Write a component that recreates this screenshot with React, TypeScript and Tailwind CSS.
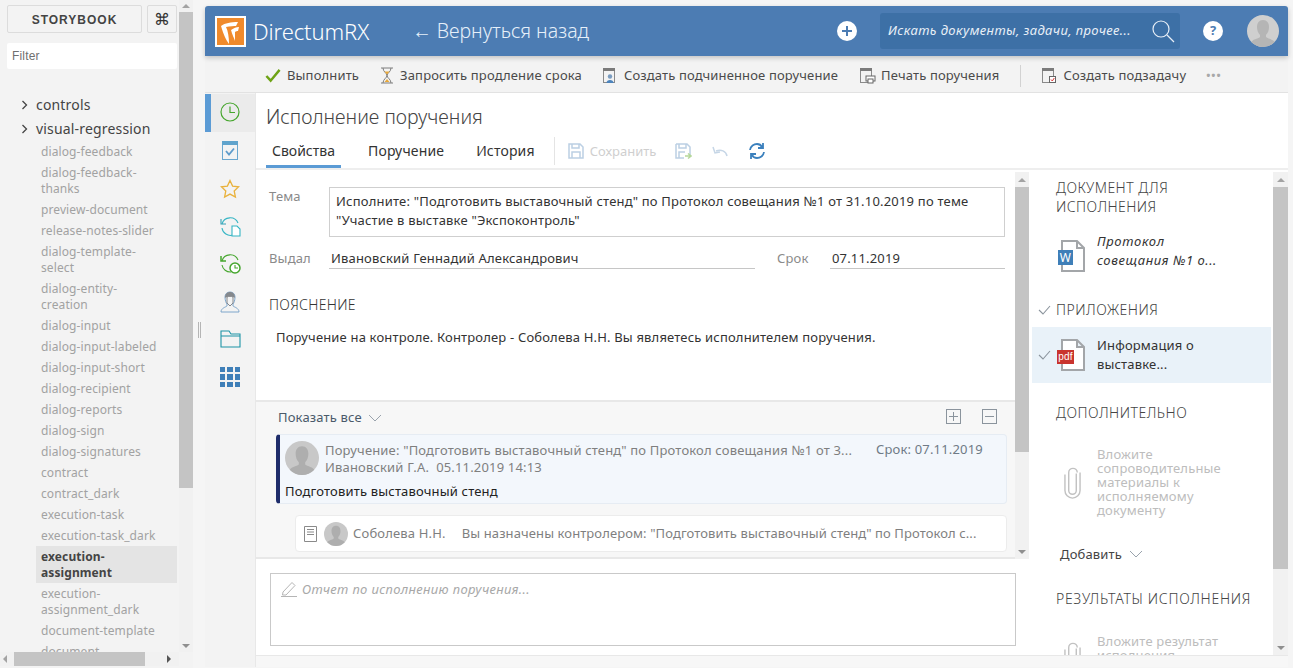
import type { ReactNode } from "react";

const NAV_ITEMS = [
  ["dialog-feedback"],
  ["dialog-feedback-", "thanks"],
  ["preview-document"],
  ["release-notes-slider"],
  ["dialog-template-", "select"],
  ["dialog-entity-", "creation"],
  ["dialog-input"],
  ["dialog-input-labeled"],
  ["dialog-input-short"],
  ["dialog-recipient"],
  ["dialog-reports"],
  ["dialog-sign"],
  ["dialog-signatures"],
  ["contract"],
  ["contract_dark"],
  ["execution-task"],
  ["execution-task_dark"],
  ["execution-", "assignment"],
  ["execution-", "assignment_dark"],
  ["document-template"],
  ["document"],
];

function Chevron({ className = "" }: { className?: string }) {
  return (
    <svg className={className} width="14" height="8" viewBox="0 0 14 8" fill="none" stroke="#9aa3ad">
      <path d="M1 1l6 6 6-6" />
    </svg>
  );
}

function Avatar({ size, fill = "#c8c8c8", head = "#aeaeae" }: { size: number; fill?: string; head?: string }) {
  return (
    <svg width={size} height={size} viewBox="0 0 32 32" className="shrink-0">
      <clipPath id={`av${size}`}>
        <circle cx="16" cy="16" r="16" />
      </clipPath>
      <g clipPath={`url(#av${size})`}>
        <rect width="32" height="32" fill={fill} />
        <path d="M16 5c-4 0-6 3-6 7 0 3 1 6 3 8v2c-2 2-8 2-9 6v4h24v-4c-1-4-7-4-9-6v-2c2-2 3-5 3-8 0-4-2-7-6-7z" fill={head} />
      </g>
    </svg>
  );
}

function Sheet({ badge }: { badge?: ReactNode }) {
  return (
    <div className="relative h-[32px] w-[28px] shrink-0">
      <svg width="28" height="32" viewBox="0 0 28 32" fill="none" stroke="#a3a6a9" strokeWidth="2">
        <path d="M5 1h15l7 7v23H5zM20 1v7h7" fill="#fff" />
      </svg>
      {badge}
    </div>
  );
}

function ToolButton({ icon, label }: { icon: ReactNode; label: string }) {
  return (
    <div className="flex items-center gap-[5px] whitespace-nowrap">
      {icon}
      <span>{label}</span>
    </div>
  );
}

function CalendarIcon({ children }: { children?: ReactNode }) {
  return (
    <svg width="17" height="17" viewBox="0 0 17 17" fill="none">
      <rect x="1.5" y="2.5" width="11" height="13" stroke="#8a8a8a" />
      <rect x="1" y="1" width="12" height="3" fill="#7b7b7b" />
      {children}
    </svg>
  );
}

function Scrollbar({ thumbHeight, button = 15, className = "" }: { thumbHeight: number; button?: number; className?: string }) {
  return (
    <div className={`flex w-[14px] shrink-0 flex-col bg-[#f1f1f1] ${className}`}>
      <div className="flex shrink-0 items-center justify-center" style={{ height: button }}>
        <div className="h-0 w-0 border-x-[4px] border-b-[4px] border-x-transparent border-b-[#a3a3a3]" />
      </div>
      <div className="min-h-0 flex-1">
        <div className="bg-[#c4c4c4]" style={{ height: thumbHeight }} />
      </div>
      <div className="flex shrink-0 items-center justify-center" style={{ height: button }}>
        <div className="h-0 w-0 border-x-[4px] border-t-[4px] border-x-transparent border-t-[#8f8f8f]" />
      </div>
    </div>
  );
}

function Sidebar() {
  return (
    <aside className="flex h-[668px] w-[193px] shrink-0 flex-col overflow-hidden bg-[#f3f3f3]">
      <div className="flex min-h-0 flex-1">
        <div className="flex w-[179px] flex-col pl-[7px] pr-[2px]">
          <div className="mt-[5px] flex h-[28px] shrink-0 gap-[5px]">
            <div className="flex w-[135px] items-center justify-center rounded-[2px] border border-[#dcdcdc] pt-px font-['Liberation_Sans',sans-serif] text-[12px] font-bold tracking-[1px] text-[#444]">
              STORYBOOK
            </div>
            <div className="flex w-[30px] items-center justify-center rounded-[2px] border border-[#dcdcdc] text-[16px] text-[#333]">
              ⌘
            </div>
          </div>
          <div className="mt-[10px] flex h-[26px] shrink-0 items-center rounded-[2px] bg-white pl-[5px] font-['Liberation_Sans',sans-serif] text-[12px] text-[#6f6f6f]">
            Filter
          </div>
          <div className="mt-[26px] min-h-0 flex-1 overflow-hidden pl-[14px]">
            <div className="flex h-[20px] items-center gap-[7px] text-[14px] leading-[20px] text-[#444]">
              <svg width="8" height="10" viewBox="0 0 8 10" fill="none" stroke="#444" strokeWidth="1.3">
                <path d="M1.5 1l4 4-4 4" />
              </svg>
              controls
            </div>
            <div className="mt-[4px] flex h-[20px] items-center gap-[7px] text-[14px] leading-[20px] text-[#444]">
              <svg width="8" height="10" viewBox="0 0 8 10" fill="none" stroke="#444" strokeWidth="1.3">
                <path d="M1.5 1l4 4-4 4" />
              </svg>
              visual-regression
            </div>
            <ul className="ml-[15px] mt-[2px]">
              {NAV_ITEMS.map((lines) => {
                const active = lines[1] === "assignment";
                return (
                  <li
                    key={lines.join("")}
                    className={`py-[2.5px] pl-[5px] text-[12px] leading-[16px] tracking-[0.1px] ${active ? "bg-[#e4e4e4] font-bold text-[#444]" : "text-[#a2a2a2]"}`}
                  >
                    {lines.map((line) => (
                      <div key={line}>{line}</div>
                    ))}
                  </li>
                );
              })}
            </ul>
          </div>
        </div>
        <Scrollbar thumbHeight={476} button={12} />
      </div>
      <div className="flex h-[16px] shrink-0 items-start">
        <div className="flex h-[14px] w-[179px] items-center bg-[#f1f1f1]">
          <div className="ml-[3px] h-0 w-0 border-y-[4px] border-r-[4px] border-y-transparent border-r-[#a3a3a3]" />
          <div className="ml-[7px] h-[14px] w-[131px] bg-[#c4c4c4]" />
          <div className="ml-[22px] h-0 w-0 border-y-[4px] border-l-[4px] border-y-transparent border-l-[#555]" />
        </div>
      </div>
    </aside>
  );
}

function Header() {
  return (
    <header className="relative z-10 flex h-[50px] shrink-0 items-center rounded-t-[3px] bg-[#4c7cb3] pl-[10px] tracking-normal text-white shadow-[0_2px_5px_rgba(0,0,0,0.2)]">
      <div className="flex h-[31px] w-[31px] shrink-0 items-center justify-center border-2 border-white bg-[#f08a2c]">
        {/* logo swoosh */}
        <svg width="27" height="27" viewBox="0 0 27 27" fill="#fff">
          <path d="M21 4C14 4 8 5 4 8c2 7 5 14 8 18 0-7-1-13-3-17 4-1 8-1 10-1z" />
          <path d="M22 9c-3 0-5 1-8 3 1 4 3 8 4 11 0-4 0-7 0-9 1-1 2-1 3-1z" />
        </svg>
      </div>
      <span className="ml-[7px] whitespace-nowrap text-[22px] font-light tracking-[-0.1px]">DirectumRX</span>
      <span className="ml-[43px] whitespace-nowrap text-[19.5px] font-light text-[#e6f0fa]">← Вернуться назад</span>
      <div className="ml-auto flex items-center">
        <div className="flex h-[20px] w-[20px] items-center justify-center rounded-full bg-white">
          <svg width="12" height="12" viewBox="0 0 12 12" stroke="#4c7cb3" strokeWidth="2">
            <path d="M6 1v10M1 6h10" />
          </svg>
        </div>
        <div className="ml-[23px] flex h-[36px] w-[300px] items-center rounded-[3px] bg-[#3d70a6] pl-[8px] pr-[4px] text-[13px] italic tracking-[0.4px] text-[#e8eff7]">
          <span className="whitespace-nowrap">Искать документы, задачи, прочее...</span>
          <svg className="ml-auto" width="26" height="26" viewBox="0 0 26 26" fill="none" stroke="#e8eff7" strokeWidth="1.2">
            <circle cx="11" cy="11" r="8" />
            <path d="M17 17l7 7" />
          </svg>
        </div>
        <div className="ml-[23px] flex h-[20px] w-[20px] items-center justify-center rounded-full bg-white text-[13px] font-bold text-[#4c7cb3]">
          ?
        </div>
        <div className="ml-[24px] mr-[9px]">
          <Avatar size={32} fill="#cfcfcf" head="#b5b5b5" />
        </div>
      </div>
    </header>
  );
}

function Toolbar() {
  return (
    <div className="flex h-[37px] shrink-0 items-center border-b border-[#e2e2e2] bg-[#f3f3f3] pl-[60px] pt-[3px] text-[13px] tracking-[0.15px] text-[#4a4a4a]">
      <div className="flex items-center gap-[6px] whitespace-nowrap">
        <svg width="16" height="15" viewBox="0 0 17 15" fill="none" stroke="#6ea315" strokeWidth="2.6">
          <path d="M1.5 8l4.5 5L15.500 1.500" />
        </svg>
        <span>Выполнить</span>
      </div>
      <div className="ml-[21px] flex items-center gap-[6px] whitespace-nowrap">
        <svg width="14" height="17" viewBox="0 0 14 17" fill="none" stroke="#7d7d7d">
          <path d="M1 1h12M1 16h12M3 1c0 4 4 5 4 7.500S3 12 3 16M11 1c0 4-4 5-4 7.500S11 12 11 16" />
          <path d="M4.500 15l2.500-3 2.500 3zM4.500 4.500h5L7 7.500z" fill="#e9a93a" stroke="none" />
        </svg>
        <span>Запросить продление срока</span>
      </div>
      <div className="ml-[20px]">
        <ToolButton
          icon={
            <CalendarIcon>
              <circle cx="8" cy="9.500" r="2.200" fill="#7a9cc0" />
              <path d="M4.500 16c0-2 1.500-3 3.500-3s3.500 1 3.500 3z" fill="#4c83bb" />
            </CalendarIcon>
          }
          label="Создать подчиненное поручение"
        />
      </div>
      <div className="ml-[21px]">
        <ToolButton
          icon={
            <CalendarIcon>
              <rect x="7" y="9" width="9" height="5" fill="#fff" stroke="#666" />
              <rect x="9" y="12" width="5" height="4" fill="#fff" stroke="#666" />
            </CalendarIcon>
          }
          label="Печать поручения"
        />
      </div>
      <div className="ml-[21px] h-[22px] w-px bg-[#d2d2d2]" />
      <div className="ml-[20px]">
        <ToolButton
          icon={
            <CalendarIcon>
              <rect x="8.500" y="9.500" width="6" height="6" fill="#fff" stroke="#666" />
              <path d="M10 12.500l1.300 1.500 2-3" stroke="#d33" />
            </CalendarIcon>
          }
          label="Создать подзадачу"
        />
      </div>
      <span className="ml-[20px] text-[11px] font-bold tracking-[1px] text-[#a8a8a8]">•••</span>
    </div>
  );
}

function SideNav() {
  return (
    <nav className="flex w-[50px] shrink-0 flex-col bg-[#f3f3f3] pt-px">
      <div className="flex h-[38px] shrink-0 items-center justify-center border-l-[6px] border-[#5b9bd5] bg-[#ebebeb] pb-[2px] pr-[6px]">
        <svg width="20" height="20" viewBox="0 0 20 20" fill="none" stroke="#46a62e" strokeWidth="1.200">
          <circle cx="10" cy="10" r="9" />
          <path d="M10 4.500v6h5" />
        </svg>
      </div>
      <div className="flex h-[37.7px] shrink-0 items-center justify-center">
        <svg width="18" height="21" viewBox="0 0 18 21" fill="none">
          <rect x="1.500" y="1.500" width="15" height="18" stroke="#6aa7cf" />
          <rect x="1" y="1" width="16" height="4" fill="#5fa3cc" />
          <path d="M5 11l3 3.500 5-6" stroke="#5f9ccb" strokeWidth="1.800" />
        </svg>
      </div>
      <div className="flex h-[37.7px] shrink-0 items-center justify-center">
        <svg width="20" height="20" viewBox="0 0 20 20" fill="none" stroke="#e9b23d" strokeWidth="1.300">
          <path d="M10 1.500l2.600 5.600 6 .7-4.400 4.200 1.200 6.100L10 15.100l-5.400 3 1.200-6.100L1.400 7.800l6-.7z" />
        </svg>
      </div>
      <div className="flex h-[37.7px] shrink-0 items-center justify-center">
        <svg width="21" height="21" viewBox="0 0 21 21" fill="none" stroke="#35b5c4" strokeWidth="1.100">
          <path d="M2 8a8.500 8.500 0 0 1 16-1M13 19a8.500 8.500 0 0 1-11-7" />
          <path d="M1 3v5h5" stroke="#35a0b5" />
          <path d="M12 10h5l3 3v7h-8z" fill="#fff" />
        </svg>
      </div>
      <div className="flex h-[37.7px] shrink-0 items-center justify-center">
        <svg width="21" height="21" viewBox="0 0 21 21" fill="none" stroke="#46a62e" strokeWidth="1.100">
          <path d="M2 8a8.500 8.500 0 0 1 16-1M11 19a8.500 8.500 0 0 1-9-7" />
          <path d="M1 3v5h5" strokeWidth="1.500" />
          <circle cx="15" cy="15" r="5" fill="#fff" strokeWidth="1.500" />
          <path d="M15 12v3h3" />
        </svg>
      </div>
      <div className="flex h-[37.7px] shrink-0 items-center justify-center">
        <svg width="20" height="22" viewBox="0 0 20 22" fill="none">
          <path d="M10 1c-3 0-5 2-5 5 0 3 1 6 2 7v2c-1 1-6 2-6 6h18c0-4-5-5-6-6v-2c1-1 2-4 2-7 0-3-2-5-5-5z" stroke="#7fa6cb" />
          <path d="M5 7c0-4 2-6 5-6s5 2 5 6c-2-2-8-2-10 0z" fill="#85888c" />
          <path d="M7 6c2-1 4-1 6 0v6l-3 3-3-3z" stroke="#85888c" />
        </svg>
      </div>
      <div className="flex h-[37.7px] shrink-0 items-center justify-center">
        <svg width="21" height="18" viewBox="0 0 21 18" fill="none" stroke="#1d94a6" strokeWidth="1.100">
          <path d="M1 17V1h8l2 3h9v13zM1 6h19" />
        </svg>
      </div>
      <div className="flex h-[37.7px] shrink-0 items-center justify-center">
        <div className="grid grid-cols-3 gap-[2px]">
          {[0, 1, 2, 3, 4, 5, 6, 7, 8].map((cell) => (
            <div key={cell} className="h-[5.500px] w-[5.500px] bg-[#3f7fb8]" />
          ))}
        </div>
      </div>
    </nav>
  );
}

function TitleBlock() {
  return (
    <div className="h-[77px] shrink-0 border-b-2 border-[#eeeeee] pl-[10px]">
      <h1 className="pt-[11px] text-[19.500px] font-light leading-[26px] tracking-normal text-[#444]">Исполнение поручения</h1>
      <div className="mt-[7px] flex items-start text-[14px] text-[#333]">
        <div className="h-[31px] w-[75px] border-b-[3px] border-[#5b9bd5] pl-[6px] pt-[2px] leading-[24px] tracking-normal">Свойства</div>
        <div className="ml-[27px] pt-[2px] leading-[24px] tracking-[0.15px]">Поручение</div>
        <div className="ml-[32px] pt-[2px] leading-[24px] tracking-[0.15px]">История</div>
        <div className="ml-[19px] h-[28px] w-px bg-[#e4e4e4]" />
        <div className="ml-[13px] flex items-center gap-[6px] pt-[2px] text-[13px] leading-[24px] tracking-normal text-[#cfcfcf]">
          <svg width="16" height="16" viewBox="0 0 16 16" fill="none" stroke="#bcd0e4" strokeWidth="1.500">
            <path d="M1 1h11l3 3v11H1zM4 1v4h7V1M4 15v-6h8v6" />
          </svg>
          Сохранить
        </div>
        <svg className="ml-[19px] mt-[6px]" width="17" height="17" viewBox="0 0 17 17" fill="none" stroke="#bcd0e4" strokeWidth="1.500">
          <path d="M1 1h11l3 3v8M1 1v14h8M4 1v4h7V1M4 15v-6h6" />
          <path d="M10 13h6M13 10.500l3 2.500-3 2.500" stroke="#b5d79a" />
        </svg>
        <svg className="ml-[20px] mt-[8px]" width="16" height="12" viewBox="0 0 16 12" fill="none" stroke="#c6d6e6" strokeWidth="1.500">
          <path d="M15 11c-1-5-6-7-11-5M1 2l2 6 5-1" />
        </svg>
        <svg className="ml-[20px] mt-[5px]" width="18" height="18" viewBox="0 0 18 18" fill="none" stroke="#3b80bd" strokeWidth="1.800">
          <path d="M2 8c.5-4 4-6 7-6 2 0 4 1 5 3M15 1v5h-5M16 10c-.5 4-4 6-7 6-2 0-4-1-5-3M3 17v-5h5" />
        </svg>
      </div>
    </div>
  );
}

function Form() {
  return (
    <div className="h-[230px] shrink-0 pl-[13px] pr-[10px] pt-[17px] text-[13px]">
      <div className="flex">
        <div className="w-[60px] leading-[18px] text-[#8a8a8a]">Тема</div>
        <div className="h-[50px] w-[676px] border border-[#cfcfcf] px-[6px] pt-[4px] leading-[19px] tracking-[0.2px] text-[#333]">
          Исполните: "Подготовить выставочный стенд" по Протокол совещания №1 от 31.10.2019 по теме
          <br />
          "Участие в выставке "Экспоконтроль"
        </div>
      </div>
      <div className="mt-[10px] flex leading-[22px]">
        <div className="w-[60px] text-[#8a8a8a]">Выдал</div>
        <div className="h-[22px] w-[426px] border-b border-[#c6c6c6] pl-[2px] text-[#333]">Ивановский Геннадий Александрович</div>
        <div className="ml-[22px] w-[53px] text-[#8a8a8a]">Срок</div>
        <div className="h-[22px] w-[175px] border-b border-[#c6c6c6] pl-[2px] text-[#333]">07.11.2019</div>
      </div>
      <div className="mt-[26px] text-[14px] font-light leading-[20px] tracking-[0.3px] text-[#333]">ПОЯСНЕНИЕ</div>
      <div className="ml-[7px] mt-[12px] leading-[20px] text-[#333]">
        Поручение на контроле. Контролер - Соболева Н.Н. Вы являетесь исполнителем поручения.
      </div>
    </div>
  );
}

function Thread() {
  return (
    <div className="h-[159px] shrink-0 border-y-2 border-[#e8e8e8] bg-[#f7f7f7] pl-[20px] pr-[8px] text-[13px]">
      <div className="flex h-[32px] items-center pl-[2px] pr-[10px] text-[#4a5a6a]">
        <span>Показать все</span>
        <Chevron className="ml-[6px]" />
        <div className="-mt-[3px] ml-auto flex gap-[21px]">
          <div className="flex h-[15px] w-[15px] items-center justify-center border border-[#8b949d]">
            <svg width="9" height="9" viewBox="0 0 9 9" stroke="#8b949d"><path d="M4.500 0v9M0 4.500h9" /></svg>
          </div>
          <div className="flex h-[15px] w-[15px] items-center justify-center border border-[#8b949d]">
            <svg width="9" height="9" viewBox="0 0 9 9" stroke="#8b949d"><path d="M0 4.500h9" /></svg>
          </div>
        </div>
      </div>
      <div className="h-[70px] rounded-[4px] border border-[#e6ecf3] border-l-[4px] border-l-[#1f2d6b] bg-[#f3f7fc] pl-[5px] pt-[6px]">
        <div className="flex">
          <Avatar size={34} />
          <div className="ml-[6px] mt-px min-w-0 flex-1 leading-[16px] text-[#7f7f7f]">
            <div className="flex whitespace-nowrap">
              <span className="w-[530px] whitespace-nowrap">Поручение: "Подготовить выставочный стенд" по Протокол совещания №1 от 3...</span>
              <span className="-mt-px ml-[21px] text-[#6f7a86]">Срок: 07.11.2019</span>
            </div>
            <div className="mt-px">Ивановский Г.А.&nbsp; 05.11.2019 14:13</div>
          </div>
        </div>
        <div className="mt-[7px] leading-[18px] text-[#222]">Подготовить выставочный стенд</div>
      </div>
      <div className="ml-[19px] mt-[11px] flex h-[37px] items-center rounded-[4px] border border-[#ececec] bg-white pl-[8px] text-[#7f7f7f]">
        <svg className="shrink-0" width="13" height="16" viewBox="0 0 13 16" fill="none" stroke="#8a8a8a">
          <path d="M.5.5h12v15H.5zM3 3.500h7M3 6h7M3 8.500h7" />
        </svg>
        <div className="ml-[7px]"><Avatar size={24} /></div>
        <span className="ml-[5px] whitespace-nowrap">Соболева Н.Н.</span>
        <span className="ml-[16px] whitespace-nowrap tracking-[0.1px]">Вы назначены контролером: "Подготовить выставочный стенд" по Протокол с...</span>
      </div>
    </div>
  );
}

function Report() {
  return (
    <div className="min-h-0 flex-1 pl-[14px] pr-[13px] pt-[14px]">
      <div className="flex h-[73px] items-start gap-[5px] border border-[#c9c9c9] pl-[10px] pt-[7px] text-[13px] italic tracking-[0.35px] text-[#a8a8a8]">
        <svg width="16" height="16" viewBox="0 0 16 16" fill="none" stroke="#b5b5b5">
          <path d="M2 11L11 1.500l3 3L5 14H1.500zM0 15.500h16" />
        </svg>
        <span className="leading-[17px]">Отчет по исполнению поручения...</span>
      </div>
    </div>
  );
}

function Paperclip() {
  return (
    <svg className="shrink-0" width="17" height="33" viewBox="0 0 18 33" fill="none" stroke="#c2c2c2" strokeWidth="1.500">
      <path d="M13 7v18a4 4 0 0 1-8 0V6a4.500 4.500 0 0 1 9 0M1 8v17a8 8 0 0 0 16 0V6" />
    </svg>
  );
}

function Attachments() {
  return (
    <div className="flex w-[259px] shrink-0 overflow-hidden">
      <div className="w-[244px] shrink-0 overflow-hidden pt-[8px]">
        <div className="ml-[27px] text-[14px] font-light leading-[19px] tracking-[0.45px] text-[#444]">ДОКУМЕНТ ДЛЯ<br />ИСПОЛНЕНИЯ</div>
        <div className="ml-[28px] mt-[16px] flex">
          <div className="mt-[8px]">
            <Sheet
              badge={
                <div className="absolute left-[1px] top-[10px] flex h-[15px] w-[15px] items-center justify-center bg-[#3f7fb8] text-[12px] leading-none text-white">W</div>
              }
            />
          </div>
          <div className="ml-[12px] text-[13px] italic leading-[19px] tracking-[0.6px] text-[#333]">Протокол<br />совещания №1 о...</div>
        </div>
        <div className="ml-[9px] mt-[28px] flex items-center">
          <svg width="13" height="10" viewBox="0 0 13 10" fill="none" stroke="#8b949d" strokeWidth="1.100">
            <path d="M1 5l4 4 7-8" />
          </svg>
          <span className="ml-[5px] text-[14px] font-light leading-[19px] tracking-[0.5px] text-[#444]">ПРИЛОЖЕНИЯ</span>
        </div>
        <div className="ml-[3px] mt-[8px] flex h-[56px] w-[239px] items-center bg-[#e9f2f9] pl-[6px]">
          <svg width="13" height="10" viewBox="0 0 13 10" fill="none" stroke="#8b949d" strokeWidth="1.100">
            <path d="M1 5l4 4 7-8" />
          </svg>
          <div className="ml-[6px]">
            <Sheet
              badge={
                <div className="absolute left-0 top-[11px] flex h-[14px] w-[17px] items-center justify-center bg-[#c9342e] font-['Liberation_Sans',sans-serif] text-[10px] leading-none text-white">pdf</div>
              }
            />
          </div>
          <div className="ml-[12px] text-[13px] leading-[19px] text-[#333]">Информация о<br />выставке...</div>
        </div>
        <div className="ml-[27px] mt-[20px] text-[14px] font-light leading-[19px] tracking-[0.5px] text-[#444]">ДОПОЛНИТЕЛЬНО</div>
        <div className="ml-[35px] mt-[25px] flex items-center">
          <Paperclip />
          <div className="ml-[16px] text-[13px] leading-[14px] text-[#bdbdbd]">Вложите<br />сопроводительные<br />материалы к<br />исполняемому<br />документу</div>
        </div>
        <div className="ml-[31px] mt-[28px] flex items-center text-[13px] leading-[18px] text-[#444]">
          Добавить
          <Chevron className="ml-[7px]" />
        </div>
        <div className="ml-[27px] mt-[26px] whitespace-nowrap text-[14px] font-light leading-[19px] tracking-[0.7px] text-[#444]">РЕЗУЛЬТАТЫ ИСПОЛНЕНИЯ</div>
        <div className="ml-[35px] mt-[26px] flex items-start">
          <div className="mt-[7px]"><Paperclip /></div>
          <div className="ml-[16px] text-[13px] leading-[14px] text-[#bdbdbd]">Вложите результат<br />исполнения</div>
        </div>
      </div>
      <Scrollbar thumbHeight={382} className="mt-[2px] !w-[15px]" />
    </div>
  );
}

export default function App() {
  return (
    <div className="flex h-[668px] w-[1293px] overflow-hidden bg-[#f5f5f5] font-['Noto_Sans',sans-serif] tracking-[0.17px]">
      <Sidebar />
      <div className="flex w-[12px] shrink-0 items-center justify-center pb-[8px]">
        <div className="h-[16px] w-[3px] border-x border-[#b5b5b5]" />
      </div>
      <main className="mb-px mr-[5px] mt-[6px] flex min-w-0 flex-1 flex-col">
        <Header />
        <Toolbar />
        <div className="flex h-[574px] min-h-0">
          <SideNav />
          <div className="flex min-w-0 flex-1 flex-col border-l border-[#e8e8e8] bg-white">
            <TitleBlock />
            <div className="flex min-h-0 flex-1">
              <div className="flex min-w-0 flex-1 flex-col">
                <div className="flex h-[389px] shrink-0">
                  <div className="min-w-0 flex-1">
                    <Form />
                    <Thread />
                  </div>
                  <Scrollbar thumbHeight={265} className="mt-[2px]" />
                </div>
                <Report />
              </div>
              <Attachments />
            </div>
            <div className="h-[12px] shrink-0 border-t border-[#e8e8e8] bg-[#f7f7f7]" />
          </div>
        </div>
      </main>
    </div>
  );
}
